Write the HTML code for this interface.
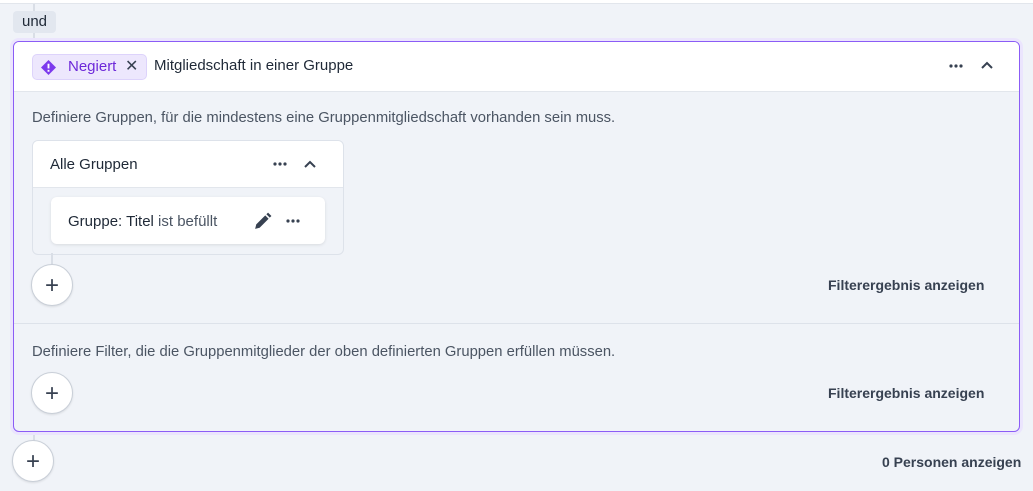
<!DOCTYPE html>
<html><head><style>
body{margin:0;width:1033px;height:491px;background:#f0f3f8;font-family:"Liberation Sans",sans-serif;position:relative;overflow:hidden;color:#1f2937}
.a{position:absolute}
.top{left:0;top:0;width:1033px;height:3px;background:#fff;border-bottom:1px solid #e2e6ec}
.vl{background:#d9dee6;width:2px}
.und{left:13px;top:11px;height:22px;padding:0 9px;background:#e2e7ef;border-radius:4px;font-size:15px;line-height:22px}
.box{left:13px;top:41px;width:1005px;height:389px;border:1px solid #8b5cf6;border-radius:6px;box-shadow:0 0 0 3px #ebe5fd;background:#f0f3f8;overflow:hidden}
.hdr{left:0;top:0;width:1005px;height:49px;background:#fff;border-bottom:1px solid #e2e6ec}
.tag{left:18px;top:12px;height:24px;width:113px;background:#ede7fd;border:1px solid #ddd3fb;border-radius:5px;color:#6d28d9;font-size:15px;line-height:24px}
.t{font-size:15px}
.plus{width:40px;height:40px;border-radius:50%;background:#fff;border:1px solid #c9cfd8;box-shadow:0 1px 2px rgba(0,0,0,.1);text-align:center;line-height:41px;font-size:24px;color:#374151}
.b{font-weight:bold;font-size:14px;color:#374151}
.grey{color:#4b5563;font-size:14.8px}
</style></head><body>
<div class="a top"></div>
<div class="a vl" style="left:33px;top:4px;height:440px"></div>
<div class="a und">und</div>
<div class="a box">
 <div class="a hdr">
  <div class="a tag"><svg class="a" style="left:8px;top:5px" width="15" height="15" viewBox="0 0 16 16"><path d="M8 0L16 8 8 16 0 8z" fill="#7c3aed"/><rect x="7" y="4" width="2" height="5" fill="#fff"/><rect x="7" y="10.5" width="2" height="2" fill="#fff"/></svg><span class="a" style="left:35px;top:0">Negiert</span><span class="a" style="left:92px;top:0;color:#374151;font-size:16px">✕</span></div>
  <div class="a t" style="left:140px;top:15px">Mitgliedschaft in einer Gruppe</div>
  <svg class="a" style="left:935px;top:22px" width="14" height="4" viewBox="0 0 14 4"><circle cx="2" cy="2" r="1.6" fill="#374151"/><circle cx="7" cy="2" r="1.6" fill="#374151"/><circle cx="12" cy="2" r="1.6" fill="#374151"/></svg>
  <svg class="a" style="left:966px;top:18px" width="14" height="10" viewBox="0 0 14 10"><path d="M2 8L7 3 12 8" stroke="#374151" stroke-width="2" fill="none"/></svg>
 </div>
 <div class="a grey" style="left:18px;top:68px">Definiere Gruppen, für die mindestens eine Gruppenmitgliedschaft vorhanden sein muss.</div>
 <div class="a" style="left:18px;top:98px;width:310px;height:113px;border:1px solid #dde2ea;border-radius:6px;background:#f0f3f8;overflow:hidden">
  <div class="a" style="left:0;top:0;width:310px;height:46px;background:#fff;border-bottom:1px solid #e2e6ec"></div>
  <div class="a t" style="left:17px;top:15px">Alle Gruppen</div>
  <svg class="a" style="left:240px;top:21px" width="14" height="4" viewBox="0 0 14 4"><circle cx="2" cy="2" r="1.6" fill="#374151"/><circle cx="7" cy="2" r="1.6" fill="#374151"/><circle cx="12" cy="2" r="1.6" fill="#374151"/></svg>
  <svg class="a" style="left:270px;top:18px" width="14" height="10" viewBox="0 0 14 10"><path d="M2 8L7 3 12 8" stroke="#374151" stroke-width="2" fill="none"/></svg>
  <div class="a" style="left:18px;top:56px;width:274px;height:47px;background:#fff;border-radius:6px;box-shadow:0 1px 3px rgba(0,0,0,.1)">
   <div class="a t" style="left:17px;top:16px">Gruppe: Titel <span style="color:#4b5563">ist befüllt</span></div>
   <svg class="a" style="left:203px;top:15px" width="18" height="18" viewBox="0 0 16 16"><path d="M1 15l1-4 8-8 3 3-8 8z M11 2l1.5-1.5 3 3L14 5z" fill="#374151"/></svg>
   <svg class="a" style="left:235px;top:22px" width="14" height="4" viewBox="0 0 14 4"><circle cx="2" cy="2" r="1.6" fill="#374151"/><circle cx="7" cy="2" r="1.6" fill="#374151"/><circle cx="12" cy="2" r="1.6" fill="#374151"/></svg>
  </div>
 </div>
 <div class="a vl" style="left:37px;top:211px;height:12px"></div>
 <div class="a plus" style="left:17px;top:222px">+</div>
 <div class="a b" style="left:814px;top:235px">Filterergebnis anzeigen</div>
 <div class="a" style="left:0;top:281px;width:1005px;height:1px;background:#dde2ea"></div>
 <div class="a grey" style="left:18px;top:302px">Definiere Filter, die die Gruppenmitglieder der oben definierten Gruppen erfüllen müssen.</div>
 <div class="a plus" style="left:17px;top:330px">+</div>
 <div class="a b" style="left:814px;top:343px">Filterergebnis anzeigen</div>
</div>
<div class="a plus" style="left:12px;top:440px">+</div>
<div class="a b" style="left:882px;top:454px">0 Personen anzeigen</div>
</body></html>
